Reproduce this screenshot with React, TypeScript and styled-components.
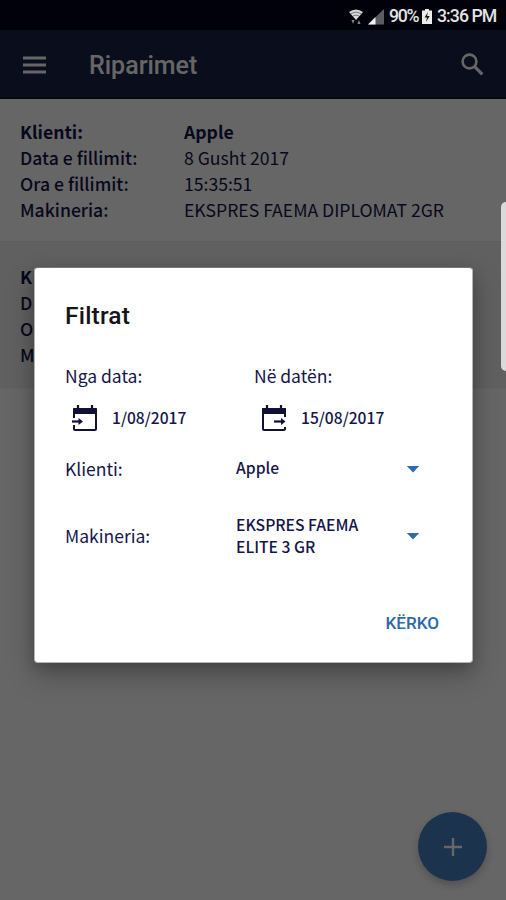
import React from "react";
import styled, { createGlobalStyle } from "styled-components";

const sourceSans = `"Noto Sans CJK SC", "Noto Sans", sans-serif`;

const GlobalStyle = createGlobalStyle`
  * { box-sizing: border-box; }
  html, body { margin: 0; background: #fff; }
`;

const Screen = styled.div`
  position: relative;
  width: 506px;
  height: 900px;
  overflow: hidden;
  display: flex;
  flex-direction: column;
  background: #fff;
  font-family: ${sourceSans};
  color: #15154a;
`;

const StatusBar = styled.header`
  position: relative;
  z-index: 2;
  height: 30px;
  flex: none;
  display: flex;
  align-items: center;
  justify-content: flex-end;
  padding: 3px 10px 0 0;
  background: #01010b;
  color: #e4e4e4;
  font: 500 17.7px/27px Roboto, sans-serif;
`;

const StatusText = styled.span<{ $width: number; $gap?: number; $track?: string }>`
  width: ${(p) => p.$width}px;
  margin-left: ${(p) => p.$gap ?? 0}px;
  letter-spacing: ${(p) => p.$track ?? "0"};
  white-space: nowrap;
`;

const StatusIcon = styled.svg<{ $gap?: number }>`
  flex: none;
  margin-left: ${(p) => p.$gap ?? 0}px;
`;

const AppBar = styled.nav`
  height: 69px;
  flex: none;
  display: flex;
  align-items: center;
  padding: 2px 22px 0 23px;
  background: #192146;
  border-bottom: 2px solid #0e132c;
`;

const BarTitle = styled.h1`
  flex: 1;
  margin: 2px 0 0 43px;
  font: 500 25px/32px Roboto, sans-serif;
  color: #fff;
`;

const Repair = styled.section<{ $shaded?: boolean }>`
  flex: none;
  height: ${(p) => (p.$shaded ? 147 : 143)}px;
  padding: ${(p) => (p.$shaded ? 22 : 20)}px 20px 0;
  background: ${(p) => (p.$shaded ? "#f0f0f0" : "#fff")};
  border-bottom: 1px solid ${(p) => (p.$shaded ? "#f7f7f7" : "#e8e8e8")};
  letter-spacing: ${(p) => (p.$shaded ? "0.8px" : "0")};
`;

const Field = styled.div`
  display: grid;
  grid-template-columns: 164px 1fr;
  height: 26px;
  line-height: 26px;
  font-size: 17.6px;
  white-space: nowrap;
`;

const FieldName = styled.span<{ $bold?: boolean }>`
  font-weight: ${(p) => (p.$bold ? 700 : 500)};
`;

const FieldValue = styled.span<{ $bold?: boolean }>`
  font-weight: ${(p) => (p.$bold ? 700 : 400)};
`;

const Fab = styled.button`
  position: absolute;
  right: 19px;
  bottom: 19px;
  width: 69px;
  height: 69px;
  padding: 0;
  border: 0;
  border-radius: 50%;
  display: grid;
  place-items: center;
  background: #467fc4;
  box-shadow: 0 4px 8px rgba(0, 0, 0, 0.22);
`;

const Scrim = styled.div`
  position: absolute;
  inset: 30px 0 0;
  background: rgba(0, 0, 0, 0.6);
`;

const EdgeHandle = styled.div`
  position: absolute;
  top: 202px;
  right: -6px;
  width: 11px;
  height: 169px;
  border-radius: 5px;
  background: #dadada;
`;

const Dialog = styled.div`
  position: absolute;
  top: 267px;
  left: 34px;
  width: 439px;
  height: 396px;
  padding: 31px 30px 0;
  border: 1px solid #b4b4b4;
  border-top-color: #777;
  border-radius: 4px;
  background: #fff;
  box-shadow: 0 12px 28px rgba(0, 0, 0, 0.25), 0 5px 14px rgba(0, 0, 0, 0.16);
`;

const DialogTitle = styled.h2`
  margin: 0 0 28px;
  font: 500 24.5px/34px Roboto, sans-serif;
  letter-spacing: 0.2px;
  color: #151515;
`;

const DateColumns = styled.div`
  display: grid;
  grid-template-columns: 189px 1fr;
`;

const Label = styled.span`
  display: block;
  font-size: 17.5px;
  line-height: 30px;
  white-space: nowrap;
`;

const DatePicker = styled.div`
  display: flex;
  align-items: center;
  height: 53px;
  padding-left: 6px;
`;

const DateText = styled.span`
  margin: -1px 0 0 13px;
  font-size: 15.6px;
  font-weight: 500;
`;

const SelectRow = styled.div<{ $height: number }>`
  display: grid;
  grid-template-columns: 171px 170px 1fr;
  align-items: center;
  height: ${(p) => p.$height}px;
`;

const SelectText = styled.span`
  margin-top: -1px;
  font-size: 15.7px;
  line-height: 22px;
  font-weight: 500;
  white-space: pre-line;
`;

const Actions = styled.div`
  display: flex;
  justify-content: flex-end;
  margin-top: 30px;
  padding-right: 3px;
`;

const SearchButton = styled.button`
  padding: 0;
  border: 0;
  background: none;
  font: 500 17.1px/28px Roboto, sans-serif;
  color: #2c68aa;
`;

function CalendarIcon({ out }: { out?: boolean }) {
  return (
    <svg width="28" height="28" viewBox="0 0 28 28" fill="none" stroke="#111136">
      {out ? (
        <>
          <path d="M25 13V5H3v20q0 1 1 1h20q1 0 1-1v-2" strokeWidth="2" strokeLinejoin="round" />
          <path d="M14 17.5h9" strokeWidth="2.2" />
          <path d="M21 14l4.5 3.5L21 21z" fill="#111136" stroke="none" />
        </>
      ) : (
        <>
          <path d="M3 14V5h22v20q0 1-1 1H4q-1 0-1-1v-4" strokeWidth="2" strokeLinejoin="round" />
          <path d="M1 17.5h9" strokeWidth="2.2" />
          <path d="M7.5 14l4.5 3.5L7.5 21z" fill="#111136" stroke="none" />
        </>
      )}
      <path d="M2.5 4h23v6h-23z" fill="#111136" stroke="none" />
      <path d="M7 1v5M21 1v5" strokeWidth="2.2" />
    </svg>
  );
}

function Caret() {
  return (
    <svg width="14" height="8" viewBox="0 0 14 8">
      <path d="M.8 1h12.4L7 7.5z" fill="#2b6cac" />
    </svg>
  );
}

export default function App() {
  return (
    <Screen>
      <GlobalStyle />
      <StatusBar>
        <StatusIcon width="14" height="16" viewBox="0 0 14 16">
          <path d="M0 3Q7-2 14 3L7 11z" fill="#d8d8d8" />
          <path d="M2 4.5q5-3 10 0M4 7q3-2 6 0" fill="none" stroke="#77777d" />
          <path d="M2.5 11h3L4 15zM8.5 15h3L10 11z" fill="#888" />
        </StatusIcon>
        <StatusIcon $gap={5} width="16" height="16" viewBox="0 0 16 16">
          <path d="M0 15.5L16 0v15.5z" fill="#5b5b62" />
          <path d="M0 15.5L7.5 8v7.5z" fill="#f0f0f0" />
        </StatusIcon>
        <StatusText $width={30} $gap={5} $track="-1.3px">90%</StatusText>
        <StatusIcon $gap={3} width="10" height="15" viewBox="0 0 10 15">
          <path d="M3 0h4v1.5h3V15H0V1.5h3z" fill="#ececec" />
          <path d="M6 3L2.5 8.5H5L4 13l3.7-6H5z" fill="#15151b" />
        </StatusIcon>
        <StatusText $width={59} $gap={5} $track="-0.95px">3:36 PM</StatusText>
      </StatusBar>

      <AppBar>
        <svg width="23" height="18" viewBox="0 0 23 18">
          <path d="M0 2h23M0 9h23M0 16h23" stroke="#fff" strokeWidth="2.8" />
        </svg>
        <BarTitle>Riparimet</BarTitle>
        <svg width="23" height="23" viewBox="0 0 23 23" fill="none" stroke="#fff">
          <circle cx="8.5" cy="8.5" r="6.9" strokeWidth="2.6" />
          <path d="M13.3 13.3l8 8" strokeWidth="3.2" />
        </svg>
      </AppBar>

      <Repair>
        <Field><FieldName $bold>Klienti:</FieldName><FieldValue $bold>Apple</FieldValue></Field>
        <Field><FieldName>Data e fillimit:</FieldName><FieldValue>8 Gusht 2017</FieldValue></Field>
        <Field><FieldName>Ora e fillimit:</FieldName><FieldValue>15:35:51</FieldValue></Field>
        <Field><FieldName>Makineria:</FieldName><FieldValue>EKSPRES FAEMA DIPLOMAT 2GR</FieldValue></Field>
      </Repair>
      <Repair $shaded>
        <Field><FieldName $bold>Klienti:</FieldName></Field>
        <Field><FieldName>Data e fillimit:</FieldName></Field>
        <Field><FieldName>Ora e fillimit:</FieldName></Field>
        <Field><FieldName>Makineria:</FieldName></Field>
      </Repair>

      <Fab aria-label="Shto">
        <svg width="18" height="18" viewBox="0 0 18 18">
          <path d="M9 0v18M0 9h18" stroke="#fff" strokeWidth="2.4" />
        </svg>
      </Fab>

      <Scrim />
      <EdgeHandle />

      <Dialog role="dialog">
        <DialogTitle>Filtrat</DialogTitle>
        <DateColumns>
          <div>
            <Label>Nga data:</Label>
            <DatePicker><CalendarIcon /><DateText>1/08/2017</DateText></DatePicker>
          </div>
          <div>
            <Label>Në datën:</Label>
            <DatePicker><CalendarIcon out /><DateText>15/08/2017</DateText></DatePicker>
          </div>
        </DateColumns>
        <SelectRow $height={49}>
          <Label>Klienti:</Label><SelectText>Apple</SelectText><Caret />
        </SelectRow>
        <SelectRow $height={86}>
          <Label>Makineria:</Label><SelectText>{"EKSPRES FAEMA\nELITE 3 GR"}</SelectText><Caret />
        </SelectRow>
        <Actions><SearchButton>KËRKO</SearchButton></Actions>
      </Dialog>
    </Screen>
  );
}
